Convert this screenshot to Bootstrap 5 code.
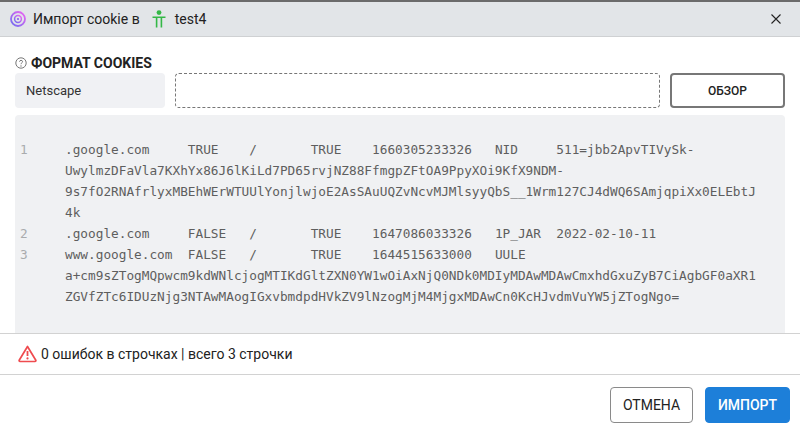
<!DOCTYPE html>
<html lang="ru">
<head>
<meta charset="utf-8">
<title>Импорт cookie</title>
<link href="https://cdn.jsdelivr.net/npm/bootstrap@5.3.0/dist/css/bootstrap.min.css" rel="stylesheet">
<style>
html,body{height:434px;overflow:hidden;background:#fff}
body{font-family:Roboto,"Liberation Sans",sans-serif;font-size:14px;color:#212529}
.top-strip{height:2px;background:#6b6b6b}
.dlg-head{height:35px;background:#e2e5e8;border-bottom:1px solid #cfd1d3;padding:0 19px 0 10px}
.dlg-title{font-size:14px;color:#222;line-height:1}
.title-icon{margin-right:7px}
.dlg-user{margin-left:12px;margin-right:9px}
.dlg-main{padding:16px 15px 0;height:296px}
.fmt-label{font-size:14px;font-weight:700;color:#222;height:20px;margin-bottom:0;line-height:20px}
.fmt-row{height:35px;gap:10px}
.fmt-box{width:150px;background:#f0f1f4;border-radius:4px;padding:1px 0 0 11px;font-size:13px;color:#333}
.drop-box{width:485px;border:1px dashed #777;border-radius:4px}
.browse-btn{width:115px;height:35px;border:2px solid #777;border-radius:4px;font-size:12px;font-weight:500;padding:0;background:#fff;color:#222}
.code-panel{background:#f0f1f3;height:218px;margin-top:7px;padding:24px 0 0 5px;border-radius:4px 4px 0 0;font-family:"DejaVu Sans Mono",monospace;font-size:12.75px;line-height:21px;color:#5e5e5e}
.code-num{width:45px;color:#a9abad;flex:none}
.code-text{white-space:pre;tab-size:8;margin:0;font:inherit;color:inherit;overflow:visible}
.status-row{height:42px;border-top:1px solid #d2d2d2;border-bottom:1px solid #d2d2d2;padding-left:18px;gap:4px;font-size:14px;color:#222}
.dlg-foot{padding:12px 10px 0 0;gap:12px}
.foot-btn{height:36px;font-size:14px;font-weight:400;padding:0;border-radius:4px}
.cancel-btn{width:83px;background:#fff;border:1px solid #8a8a8a;color:#222}
.import-btn{width:85px;background:#1d7fd9;border:1px solid #1d7fd9;color:#fff;font-weight:500}
</style>
</head>
<body>
<div class="top-strip"></div>
<div class="dlg-head d-flex align-items-center">
  <svg width="16" height="16" viewBox="0 0 16 16" class="title-icon"><defs><linearGradient id="g" x1="1" y1="0" x2="0" y2="1"><stop offset="0" stop-color="#ee66f2"/><stop offset="1" stop-color="#6f6cf0"/></linearGradient></defs><circle cx="8" cy="8" r="7" fill="none" stroke="url(#g)" stroke-width="1.8"/><circle cx="8" cy="8" r="3.4" fill="none" stroke="url(#g)" stroke-width="1.5"/><circle cx="8" cy="8" r="1.1" fill="#8a5cf0"/></svg>
  <span class="dlg-title">Импорт cookie в</span>
  <svg class="dlg-user" width="14" height="18" viewBox="0 0 14 18"><circle cx="7" cy="2.6" r="2.4" fill="#34b847"/><path d="M0.5 7.2H13.5M4.6 7.2V17.5M9.4 7.2V17.5" fill="none" stroke="#34b847" stroke-width="1.6"/></svg>
  <span class="dlg-title">test4</span>
  <svg class="ms-auto" width="10" height="10" viewBox="0 0 10 10"><path d="M.5.5L9.5 9.5M9.5.5L.5 9.5" stroke="#222" stroke-width="1.1" fill="none"/></svg>
</div>
<div class="dlg-main">
  <div class="fmt-label d-flex align-items-center gap-1">
    <svg width="12" height="12" viewBox="0 0 12 12"><circle cx="6" cy="6" r="5.2" fill="none" stroke="#777" stroke-width="1"/><path d="M4.5 4.7C4.5 2.9 7.6 2.9 7.6 4.7C7.6 5.8 6 5.8 6 7.2" fill="none" stroke="#777" stroke-width="1"/><circle cx="6" cy="9" r=".7" fill="#777"/></svg>
    <span>ФОРМАТ COOKIES</span>
  </div>
  <div class="fmt-row d-flex">
    <div class="fmt-box d-flex align-items-center">Netscape</div>
    <div class="drop-box"></div>
    <button type="button" class="btn browse-btn">ОБЗОР</button>
  </div>
  <div class="code-panel">
    <div class="d-flex"><div class="code-num">1</div><pre class="code-text">.google.com	TRUE	/	TRUE	1660305233326	NID	511=jbb2ApvTIVySk-
UwylmzDFaVla7KXhYx86J6lKiLd7PD65rvjNZ88FfmgpZFtOA9PpyXOi9KfX9NDM-
9s7fO2RNAfrlyxMBEhWErWTUUlYonjlwjoE2AsSAuUQZvNcvMJMlsyyQbS__1Wrm127CJ4dWQ6SAmjqpiXx0ELEbtJ
4k</pre></div>
    <div class="d-flex"><div class="code-num">2</div><pre class="code-text">.google.com	FALSE	/	TRUE	1647086033326	1P_JAR	2022-02-10-11</pre></div>
    <div class="d-flex"><div class="code-num">3</div><pre class="code-text">www.google.com	FALSE	/	TRUE	1644515633000	UULE
a+cm9sZTogMQpwcm9kdWNlcjogMTIKdGltZXN0YW1wOiAxNjQ0NDk0MDIyMDAwMDAwCmxhdGxuZyB7CiAgbGF0aXR1
ZGVfZTc6IDUzNjg3NTAwMAogIGxvbmdpdHVkZV9lNzogMjM4MjgxMDAwCn0KcHJvdmVuYW5jZTogNgo=</pre></div>
  </div>
</div>
<div class="status-row d-flex align-items-center">
  <svg width="19" height="18" viewBox="0 0 19 18"><path d="M9.5 1.5L17.8 15.2C18.1 15.9 17.7 16.5 17 16.5H2C1.3 16.5.9 15.9 1.2 15.2Z" fill="none" stroke="#ef4b4f" stroke-width="1.7" stroke-linejoin="round"/><path d="M9.5 6V11" stroke="#ef4b4f" stroke-width="1.8"/><circle cx="9.5" cy="13.4" r="1.1" fill="#ef4b4f"/></svg>
  <span>0 ошибок в строчках | всего 3 строчки</span>
</div>
<div class="dlg-foot d-flex justify-content-end">
  <button type="button" class="btn foot-btn cancel-btn">ОТМЕНА</button>
  <button type="button" class="btn foot-btn import-btn">ИМПОРТ</button>
</div>
<script src="https://cdn.jsdelivr.net/npm/bootstrap@5.3.0/dist/js/bootstrap.bundle.min.js"></script>
</body>
</html>
